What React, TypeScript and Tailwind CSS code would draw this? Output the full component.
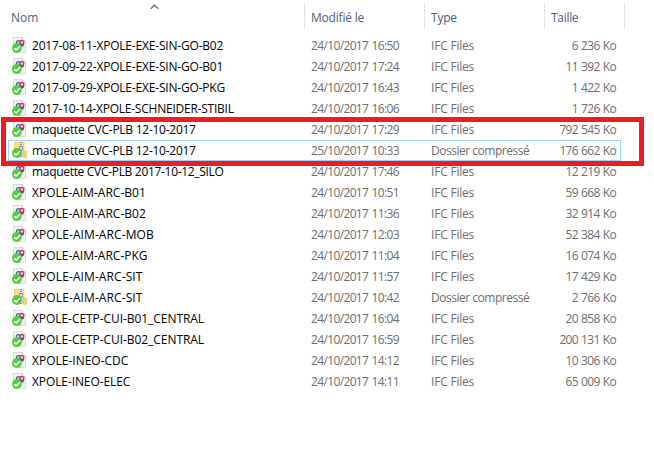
type FileKind = "ifc" | "zip";

interface FileEntry {
  name: string;
  date: string;
  kind: FileKind;
  size: string;
  spacing: string;
}

const files: FileEntry[] = [
  { name: "2017-08-11-XPOLE-EXE-SIN-GO-B02", date: "24/10/2017 16:50", kind: "ifc", size: "6 236 Ko", spacing: "tracking-[-0.19px]" },
  { name: "2017-09-22-XPOLE-EXE-SIN-GO-B01", date: "24/10/2017 17:24", kind: "ifc", size: "11 392 Ko", spacing: "tracking-[-0.19px]" },
  { name: "2017-09-29-XPOLE-EXE-SIN-GO-PKG", date: "24/10/2017 16:43", kind: "ifc", size: "1 422 Ko", spacing: "tracking-[-0.19px]" },
  { name: "2017-10-14-XPOLE-SCHNEIDER-STIBIL", date: "24/10/2017 16:06", kind: "ifc", size: "1 726 Ko", spacing: "tracking-[-0.23px]" },
  { name: "maquette CVC-PLB 12-10-2017", date: "24/10/2017 17:29", kind: "ifc", size: "792 545 Ko", spacing: "tracking-[-0.26px]" },
  { name: "maquette CVC-PLB 12-10-2017", date: "25/10/2017 10:33", kind: "zip", size: "176 662 Ko", spacing: "tracking-[-0.26px]" },
  { name: "maquette CVC-PLB 2017-10-12_SILO", date: "24/10/2017 17:46", kind: "ifc", size: "12 219 Ko", spacing: "tracking-[-0.31px]" },
  { name: "XPOLE-AIM-ARC-B01", date: "24/10/2017 10:51", kind: "ifc", size: "59 668 Ko", spacing: "" },
  { name: "XPOLE-AIM-ARC-B02", date: "24/10/2017 11:36", kind: "ifc", size: "32 914 Ko", spacing: "" },
  { name: "XPOLE-AIM-ARC-MOB", date: "24/10/2017 12:03", kind: "ifc", size: "52 384 Ko", spacing: "tracking-[0.1px]" },
  { name: "XPOLE-AIM-ARC-PKG", date: "24/10/2017 11:04", kind: "ifc", size: "16 074 Ko", spacing: "" },
  { name: "XPOLE-AIM-ARC-SIT", date: "24/10/2017 11:57", kind: "ifc", size: "17 429 Ko", spacing: "tracking-[0.1px]" },
  { name: "XPOLE-AIM-ARC-SIT", date: "24/10/2017 10:42", kind: "zip", size: "2 766 Ko", spacing: "tracking-[0.1px]" },
  { name: "XPOLE-CETP-CUI-B01_CENTRAL", date: "24/10/2017 16:04", kind: "ifc", size: "20 858 Ko", spacing: "tracking-[-0.06px]" },
  { name: "XPOLE-CETP-CUI-B02_CENTRAL", date: "24/10/2017 16:59", kind: "ifc", size: "200 131 Ko", spacing: "tracking-[-0.06px]" },
  { name: "XPOLE-INEO-CDC", date: "24/10/2017 14:12", kind: "ifc", size: "10 306 Ko", spacing: "" },
  { name: "XPOLE-INEO-ELEC", date: "24/10/2017 14:11", kind: "ifc", size: "65 009 Ko", spacing: "tracking-[-0.1px]" },
];

function SyncBadge() {
  return (
    <>
      <circle cx="4.9" cy="11" r="4.9" fill="#58cb45" />
      <path d="M2.2 11.2 4.2 13.1 7.8 9.3" fill="none" stroke="#fff" strokeWidth="1.4" />
    </>
  );
}

function FileIcon({ kind }: { kind: FileKind }) {
  return (
    <svg width="16" height="16" viewBox="0 0 16 16" className="-mt-px shrink-0">
      {kind === "ifc" ? (
        <>
          <path d="M1.5 .5H10.5L13.5 3.5V15.5H1.5Z" fill="#f1f1f1" stroke="#dadada" />
          <path d="M10.5 .5V3.5H13.5" fill="#fff" stroke="#cfcfcf" strokeWidth=".8" />
          <circle cx="6.4" cy="5.6" r="2" fill="#b9d4ec" stroke="#33679f" strokeWidth="1.2" />
          <circle cx="9.9" cy="5.4" r="1.9" fill="#f6dbe2" stroke="#d92e59" strokeWidth="1.3" />
          <path d="M8.2 6.8 10.5 9.3M10 9.3 11.8 7.3" stroke="#3c4f8e" strokeWidth="1.3" />
        </>
      ) : (
        <>
          <path d="M2 0H12.5V15H2Z" fill="#f3d268" />
          <path d="M3 1H7V15H3Z" fill="#fbe08a" />
          <path d="M11.5 9H14.4V15.4H11.5Z" fill="#f7d46a" stroke="#e5bf4d" strokeWidth=".7" />
          <path d="M7 0H11V15H7Z" fill="#dcdcda" />
          <path d="M9 0V15" stroke="#77776f" strokeWidth="1.4" strokeDasharray="1 1" />
          <path d="M7.6 4.5H10.4V8H7.6Z" fill="#eee" stroke="#777" strokeWidth=".8" />
        </>
      )}
      <SyncBadge />
    </svg>
  );
}

function Header() {
  return (
    <div className="flex h-[35px] pt-1 leading-[27px] text-[#4c607a]">
      <div className="relative h-[25px] w-[305px] border-r border-[#e2e2e2] pl-[11px]">
        Nom
        <svg width="9" height="6" viewBox="0 0 9 6" className="absolute left-[150px] top-0">
          <path d="M.7 4.7 4.5 1 8.3 4.7" fill="none" stroke="#666" strokeWidth="1.2" />
        </svg>
      </div>
      <div className="h-[25px] w-[120px] border-r border-[#e2e2e2] pl-[6px] tracking-[-0.2px]">Modifié le</div>
      <div className="h-[25px] w-[120px] border-r border-[#e2e2e2] pl-[6px] tracking-[-0.2px]">Type</div>
      <div className="h-[25px] w-[80px] border-r border-[#e2e2e2] pl-[6px] tracking-[-0.3px]">Taille</div>
    </div>
  );
}

function FileRow({ file, selected }: { file: FileEntry; selected: boolean }) {
  return (
    <div
      className={`ml-2 flex h-[21px] w-[613px] items-center border pl-[3px] text-[#6d6d6d] ${
        selected ? "border-[#99d1ff]" : "border-transparent"
      }`}
    >
      <FileIcon kind={file.kind} />
      <span className={`w-[282px] pl-1 text-black ${file.spacing}`}>{file.name}</span>
      <span className="w-[120px] pl-px tracking-[-0.64px] [word-spacing:0.8px]">{file.date}</span>
      {file.kind === "ifc" ? (
        <span className="w-[110px] pl-px tracking-[-0.2px]">IFC Files</span>
      ) : (
        <span className="w-[110px] pl-px tracking-[-0.48px]">Dossier compressé</span>
      )}
      <span className="flex-1 pr-[4px] text-right tracking-[-0.68px] [word-spacing:0.7px]">{file.size}</span>
    </div>
  );
}

export default function App() {
  return (
    <main className="relative h-[456px] w-[654px] overflow-hidden whitespace-nowrap bg-white font-['Open_Sans','Noto_Sans',sans-serif] text-[12px]">
      <Header />
      {files.map((file, i) => (
        <FileRow key={i} file={file} selected={i === 5} />
      ))}
      <div className="absolute left-px top-[117px] h-[49px] w-[643px] border-5 border-[#ed1c24]" />
    </main>
  );
}
